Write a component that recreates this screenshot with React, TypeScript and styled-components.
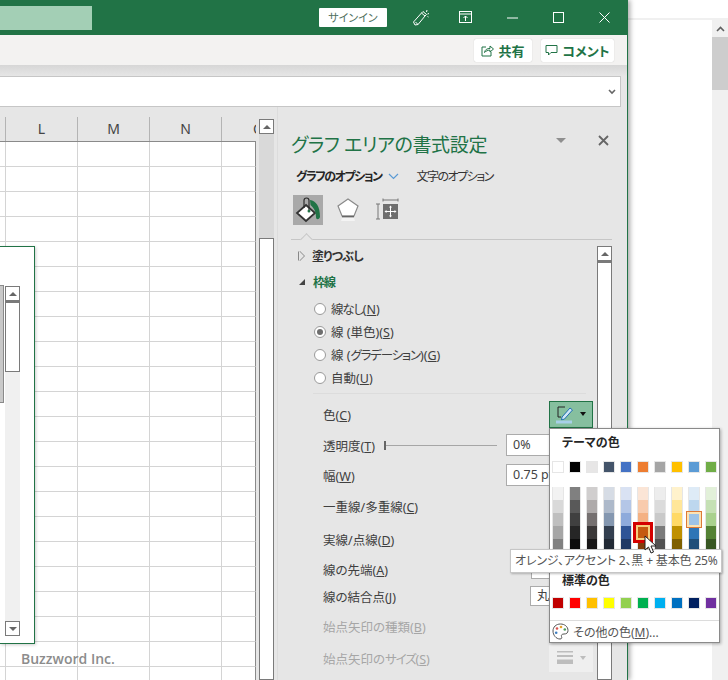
import styled, { createGlobalStyle } from 'styled-components';

const GlobalStyle = createGlobalStyle`
  html, body {
    margin: 0;
    padding: 0;
    background: #fff;
  }
  * {
    box-sizing: border-box;
  }
`;

const GREEN = '#217346';

const Page = styled.div`
  display: flex;
  width: 728px;
  height: 680px;
  overflow: hidden;
  font-family: 'Noto Sans', 'Noto Sans CJK JP', sans-serif;
  font-feature-settings: 'palt';
  font-size: 12px;
  color: #444;
`;

const ExcelWindow = styled.div`
  position: relative;
  z-index: 1;
  display: flex;
  flex-direction: column;
  flex: 0 0 628px;
  border-right: 1px solid ${GREEN};
  background: #e6e6e6;
  box-shadow: 2px 0 5px rgba(0, 0, 0, 0.35);
`;

// タイトルバー
const TitleBar = styled.div`
  display: flex;
  align-items: center;
  flex: 0 0 35px;
  background: ${GREEN};
`;

const SearchBox = styled.div`
  flex: 0 0 92px;
  height: 24px;
  margin-right: 227px;
  background: #a3cfb5;
`;

const SignIn = styled.div`
  flex: 0 0 68px;
  height: 19px;
  margin-right: 21px;
  border-radius: 1px;
  background: #fff;
  color: #4f6f5e;
  font-size: 11px;
  line-height: 19px;
  text-align: center;
`;

const WinButton = styled.div<{ $w: number }>`
  display: flex;
  align-items: center;
  justify-content: center;
  flex: 0 0 ${(p) => p.$w}px;
  color: #fff;
`;

// リボン
const RibbonRow = styled.div`
  display: flex;
  align-items: center;
  justify-content: flex-end;
  gap: 9px;
  flex: 0 0 30px;
  padding-right: 13px;
  background: #f3f2f1;
`;

const RibbonButton = styled.div<{ $w: number }>`
  display: flex;
  align-items: center;
  justify-content: center;
  gap: 4px;
  width: ${(p) => p.$w}px;
  height: 23px;
  border-radius: 2px;
  background: #fff;
  box-shadow: 0 0 1px rgba(0, 0, 0, 0.25);
  color: ${GREEN};
  font-size: 13px;
  font-weight: 700;
`;

const FormulaArea = styled.div`
  flex: 0 0 42px;
  padding: 11px 6px 0 0;
  background: linear-gradient(#d6d6d6, #e6e6e6 11px);
`;

const FormulaInput = styled.div`
  display: flex;
  align-items: center;
  justify-content: flex-end;
  height: 31px;
  padding-right: 4px;
  border: 1px solid #c6c6c6;
  border-left: 0;
  background: #fff;
  color: #666;
`;

const Body = styled.div`
  display: flex;
  flex: 1;
  min-height: 0;
`;

// シート
const SheetArea = styled.div`
  position: relative;
  display: flex;
  flex: 0 0 277px;
  padding-top: 10px;
  overflow: hidden;
`;

const SheetColumn = styled.div`
  flex: 0 0 256px;
  overflow: hidden;
`;

const HeaderRow = styled.div`
  display: grid;
  grid-template-columns: 6px repeat(3, 72px) 34px;
  height: 25px;
  border-bottom: 1px solid #8a8a8a;
`;

const HeaderCell = styled.div<{ $clip?: boolean }>`
  border-right: 1px solid #b4b4b4;
  color: #444;
  font-size: 14px;
  line-height: 23px;
  text-align: ${(p) => (p.$clip ? 'left' : 'center')};
  padding-left: ${(p) => (p.$clip ? '31px' : '0')};
  overflow: hidden;
  &:last-child {
    border-right: 0;
  }
`;

const GridRow = styled.div`
  display: grid;
  grid-template-columns: 6px repeat(3, 72px) 34px;
  height: 25px;
  background: #fff;
`;

const Cell = styled.div`
  border-right: 1px solid #d4d4d4;
  border-bottom: 1px solid #d4d4d4;
  &:last-child {
    border-right: 1px solid #8a8a8a;
  }
`;

const SheetScroll = styled.div`
  display: flex;
  flex-direction: column;
  flex: 0 0 15px;
  margin: 2px 0 0 3px;
`;

const ArrowButton = styled.div<{ $down?: boolean }>`
  display: flex;
  align-items: center;
  justify-content: center;
  flex: 0 0 15px;
  border: 1px solid #7a7a7a;
  background: #fff;
  &::after {
    content: '';
    border-left: 4px solid transparent;
    border-right: 4px solid transparent;
    ${(p) =>
      p.$down ? 'border-top: 4px solid #666;' : 'border-bottom: 4px solid #666;'}
  }
`;

const Trough = styled.div<{ $h?: number; $light?: boolean }>`
  ${(p) => (p.$h ? `flex: 0 0 ${p.$h}px;` : 'flex: 1;')}
  background: ${(p) => (p.$light ? '#f0f0f0' : '#d9d9d9')};
`;

const Thumb = styled.div<{ $h?: number; $thick?: boolean }>`
  ${(p) => (p.$h ? `flex: 0 0 ${p.$h}px;` : 'flex: 1;')}
  border: 1px solid #7a7a7a;
  border-top-width: ${(p) => (p.$thick ? 2 : 1)}px;
  background: #fff;
`;

const ChartObject = styled.div`
  position: absolute;
  left: 0;
  top: 139px;
  display: flex;
  width: 35px;
  height: 398px;
  padding-top: 39px;
  border: 1px solid ${GREEN};
  border-left: 0;
  background: #fff;
  box-shadow: 1px 1px 3px rgba(0, 0, 0, 0.2);
`;

const ChartSliver = styled.div`
  flex: 0 0 4px;
  height: 118px;
  margin-top: -1px;
  border: 1px solid #8a8a8a;
  border-left: 0;
  background: #c9c9c9;
`;

const ChartScroll = styled.div`
  display: flex;
  flex-direction: column;
  flex: 0 0 15px;
  height: 350px;
  margin-left: 1px;
`;

const Watermark = styled.div`
  position: absolute;
  left: 21px;
  top: 542px;
  color: #8c8c8c;
  font-family: 'Open Sans', sans-serif;
  font-size: 14px;
  font-weight: 600;
`;

// 書式設定ウィンドウ
const Pane = styled.div`
  flex: 1;
  padding: 26px 15px 0 13px;
  border-left: 1px solid #dcdcdc;
  background: #e6e6e6;
`;

const PaneHead = styled.div`
  display: flex;
  align-items: center;
  height: 24px;
`;

const PaneTitle = styled.div`
  flex: 1;
  color: ${GREEN};
  font-size: 19px;
  letter-spacing: -0.35px;
  line-height: 24px;
  white-space: nowrap;
`;

const PaneMenu = styled.div`
  width: 0;
  height: 0;
  margin: -10px 32px 0 0;
  border-left: 5px solid transparent;
  border-right: 5px solid transparent;
  border-top: 5px solid #8f8f8f;
`;

const PaneClose = styled.div`
  display: flex;
  margin: -10px 3px 0 0;
  color: #666;
`;

const OptionTabs = styled.div`
  display: flex;
  align-items: center;
  height: 16px;
  margin: 11px 0 0 5px;
`;

const OptionTab = styled.div<{ $active?: boolean }>`
  color: ${(p) => (p.$active ? '#262626' : '#333')};
  font-size: 12px;
  font-weight: ${(p) => (p.$active ? 700 : 400)};
  letter-spacing: -1.5px;
  white-space: nowrap;
`;

const TabChevron = styled.div`
  display: flex;
  margin: 0 17px 0 7px;
  color: #5b9bd5;
`;

const IconTabs = styled.div`
  display: flex;
  gap: 10px;
  height: 30px;
  margin: 11px 0 0 2px;
`;

const IconTab = styled.div<{ $active?: boolean }>`
  display: flex;
  align-items: center;
  justify-content: center;
  width: 30px;
  height: 30px;
  background: ${(p) => (p.$active ? '#a9a9a9' : 'transparent')};
`;

const TabRule = styled.div`
  position: relative;
  height: 1px;
  margin-top: 14px;
  background: #c6c6c6;
  &::after {
    content: '';
    position: absolute;
    left: 11px;
    top: -4px;
    width: 8px;
    height: 8px;
    border-left: 1px solid #c6c6c6;
    border-top: 1px solid #c6c6c6;
    background: #e6e6e6;
    transform: rotate(45deg);
  }
`;

const PaneScrollArea = styled.div`
  display: flex;
  height: 440px;
`;

const PaneContent = styled.div`
  flex: 0 0 306px;
  padding-top: 3px;
`;

const PaneScroll = styled.div`
  display: flex;
  flex-direction: column;
  flex: 0 0 15px;
  margin-top: 6px;
`;

const SectionRow = styled.div<{ $open?: boolean }>`
  display: flex;
  align-items: center;
  gap: 8px;
  height: 26px;
  padding-left: 8px;
  color: ${(p) => (p.$open ? GREEN : '#333')};
  font-size: 12px;
  font-weight: 700;
  letter-spacing: -0.9px;
`;

const Caret = styled.div<{ $open?: boolean }>`
  width: 0;
  height: 0;
  ${(p) =>
    p.$open
      ? `border-bottom: 6px solid #444; border-left: 6px solid transparent;`
      : `border-left: 5px solid #e6e6e6; border-top: 5px solid transparent; border-bottom: 5px solid transparent; outline: none; filter: drop-shadow(1px 0 0 #888) drop-shadow(-1px 0 0 #888);`}
`;

const RadioGroup = styled.div`
  margin-top: 2px;
  padding-left: 23px;
`;

const RadioRow = styled.div`
  display: flex;
  align-items: center;
  gap: 5px;
  height: 23px;
  font-size: 12.5px;
  color: #404040;
`;

const Radio = styled.div<{ $on?: boolean }>`
  display: flex;
  align-items: center;
  justify-content: center;
  width: 12px;
  height: 12px;
  border: 1px solid #9a9a9a;
  border-radius: 50%;
  background: #fff;
  &::after {
    content: '';
    width: 6px;
    height: 6px;
    border-radius: 50%;
    background: ${(p) => (p.$on ? '#6e6e6e' : 'transparent')};
  }
`;

const Rule = styled.div`
  height: 1px;
  margin: 4px 11px 5px 22px;
  background: #dcdcdc;
`;

const PropRow = styled.div<{ $h: number; $off?: boolean }>`
  display: flex;
  align-items: center;
  justify-content: space-between;
  height: ${(p) => p.$h}px;
  padding: 0 4px 0 32px;
  color: ${(p) => (p.$off ? '#a6a6a6' : '#404040')};
  font-size: 12.5px;
  white-space: nowrap;
`;

// メイリオUIの幅に合わせてカタカナを詰める
const Tight = styled.span`
  letter-spacing: -1.2px;
`;

const Slider = styled.div`
  position: relative;
  flex: 0 0 113px;
  height: 1px;
  background: #a6a6a6;
  &::before {
    content: '';
    position: absolute;
    left: 0;
    top: -4px;
    width: 2px;
    height: 9px;
    background: #666;
  }
`;

const ValueBox = styled.div<{ $w: number; $h: number }>`
  flex: 0 0 ${(p) => p.$w}px;
  height: ${(p) => p.$h}px;
  padding-left: 6px;
  border: 1px solid #ababab;
  background: #fff;
  color: #444;
  font-size: 12.5px;
  line-height: ${(p) => p.$h - 2}px;
  overflow: hidden;
`;

const ColorAnchor = styled.div`
  position: relative;
`;

const ColorButton = styled.div`
  display: flex;
  align-items: center;
  justify-content: center;
  gap: 5px;
  width: 44px;
  height: 27px;
  border: 1px solid ${GREEN};
  background: #86bf9f;
`;

const ButtonCaret = styled.div<{ $off?: boolean }>`
  width: 0;
  height: 0;
  border-left: 3.5px solid transparent;
  border-right: 3.5px solid transparent;
  border-top: 4px solid ${(p) => (p.$off ? '#bdbdbd' : '#111')};
`;

const DisabledButton = styled.div`
  display: flex;
  align-items: center;
  justify-content: center;
  gap: 6px;
  width: 44px;
  height: 27px;
  background: #efefef;
`;

// 色の選択メニュー
const Picker = styled.div`
  position: absolute;
  left: 0;
  top: 100%;
  z-index: 5;
  width: 171px;
  height: 215px;
  border: 1px solid #8a8a8a;
  background: #fff;
  box-shadow: 1px 1px 3px rgba(0, 0, 0, 0.3);
`;

const PickerTitle = styled.div<{ $top: number }>`
  height: 18px;
  margin-top: ${(p) => p.$top}px;
  padding-left: 12px;
  color: #262626;
  font-size: 12px;
  font-weight: 700;
  line-height: 18px;
`;

const SwatchRow = styled.div<{ $top: number }>`
  display: flex;
  gap: 5px;
  margin-top: ${(p) => p.$top}px;
  padding-left: 2px;
`;

const ShadeColumn = styled.div`
  display: flex;
  flex-direction: column;
`;

const Swatch = styled.div<{ $c: string; $tall?: boolean; $mark?: string }>`
  position: relative;
  width: 12px;
  height: ${(p) => (p.$tall ? 13 : 12)}px;
  background: ${(p) => p.$c};
  ${(p) => (p.$tall ? '' : 'outline: 1px solid #e6e6e6; outline-offset: -1px;')}
  ${(p) =>
    p.$tall
      ? 'border-left: 1px solid #e6e6e6; border-right: 1px solid #e6e6e6;'
      : ''}
  ${(p) =>
    p.$mark === 'hover' &&
    'z-index: 2; border: 0; box-shadow: inset 0 0 0 1px #f6cf7f, 0 0 0 1px #f6cf7f, 0 0 0 4px #d40000;'}
  ${(p) =>
    p.$mark === 'pick' &&
    'z-index: 1; border: 0; box-shadow: inset 0 0 0 1px #fbe3b4, 0 0 0 1px #fbe3b4, 0 0 0 2px #dd7a36;'}
`;

const PickerRule = styled.div`
  height: 1px;
  margin-top: 11px;
  background: #dcdcdc;
`;

const MoreColors = styled.div`
  display: flex;
  align-items: center;
  gap: 4px;
  height: 22px;
  padding-left: 2px;
  color: #555;
  font-size: 12px;
`;

const Tip = styled.div`
  position: absolute;
  left: -40px;
  top: 120px;
  z-index: 6;
  width: 212px;
  height: 24px;
  padding-left: 4px;
  border: 1px solid #c6c6c6;
  background: #fff;
  box-shadow: 1px 1px 2px rgba(0, 0, 0, 0.25);
  color: #555;
  font-size: 12px;
  letter-spacing: -0.15px;
  line-height: 22px;
  white-space: nowrap;
`;

const Pointer = styled.svg`
  position: absolute;
  left: 94px;
  top: 106px;
  z-index: 7;
`;

// 右側のシート
const Side = styled.div`
  display: flex;
  flex-direction: column;
  flex: 1;
  background: #fff;
`;

const SideTop = styled.div`
  flex: 0 0 20px;
  border-bottom: 2px solid #f0f0f0;
`;

const SideBody = styled.div`
  display: flex;
  justify-content: flex-end;
  flex: 1;
`;

const SideScroll = styled.div`
  display: flex;
  flex-direction: column;
  align-items: center;
  width: 16px;
  background: #f0f0f0;
`;

const SideUp = styled.div`
  display: flex;
  align-items: center;
  justify-content: center;
  height: 17px;
  color: #606060;
`;

const SideThumb = styled.div`
  width: 16px;
  height: 53px;
  background: #cdcdcd;
`;

const Key = styled.u`
  text-underline-offset: 1px;
`;

const COLUMNS = ['', 'L', 'M', 'N', 'O'];
const ROWS = Array.from({ length: 23 }, (_, i) => i);

const THEME = [
  '#ffffff', '#000000', '#e7e6e6', '#44546a', '#4472c4',
  '#ed7d31', '#a5a5a5', '#ffc000', '#5b9bd5', '#70ad47',
];

const SHADES = [
  ['#f2f2f2', '#d9d9d9', '#bfbfbf', '#a6a6a6', '#808080'],
  ['#808080', '#595959', '#404040', '#262626', '#0d0d0d'],
  ['#d0cece', '#aeaaaa', '#757070', '#3b3838', '#181717'],
  ['#d6dce5', '#adb9ca', '#8497b0', '#333f50', '#222a35'],
  ['#d9e2f3', '#b4c6e7', '#8eaadb', '#2f5496', '#1f3864'],
  ['#fbe5d6', '#f8cbad', '#f4b183', '#c55a11', '#833c0b'],
  ['#ededed', '#dbdbdb', '#c9c9c9', '#7b7b7b', '#525252'],
  ['#fff2cc', '#ffe699', '#ffd966', '#bf9000', '#7f6000'],
  ['#deebf7', '#bdd7ee', '#9dc3e6', '#2e75b6', '#1f4e79'],
  ['#e2f0d9', '#c5e0b4', '#a9d18e', '#548235', '#385723'],
];

const STANDARD = [
  '#c00000', '#ff0000', '#ffc000', '#ffff00', '#92d050',
  '#00b050', '#00b0f0', '#0070c0', '#002060', '#7030a0',
];

function markOf(col: number, row: number) {
  if (col === 5 && row === 3) return 'hover';
  if (col === 8 && row === 2) return 'pick';
  return undefined;
}

function FillIcon() {
  return (
    <svg width="26" height="27" viewBox="0 0 26 27">
      <path d="M11 8 L20 16 L11 24 L2 16 Z" fill="#fff" stroke="#333" strokeWidth="1.8" />
      <path d="M9 11 V3.5 a2.5 2.5 0 0 1 5 0 V13" fill="none" stroke="#2d2d2d" strokeWidth="1.2" />
      <circle cx="14" cy="14" r="1.5" fill={GREEN} />
      <path d="M15 3 C21 4 25 9 25 20 C24 23 21 23 21 20 C21 16 20 12 15.5 8 Z" fill={GREEN} />
    </svg>
  );
}

function PentagonIcon() {
  return (
    <svg width="24" height="26" viewBox="0 0 24 26">
      <path d="M12 2 L22 9 L18 19 H6 L2 9 Z" fill="#fff" stroke="#8a8a8a" strokeWidth="1.2" />
      <path d="M6 19.5 H18" stroke="#666" strokeWidth="1.6" />
      <path d="M6 21 L5 24 H19 L18 21 Z" fill="#f4f4f4" />
    </svg>
  );
}

function SizeIcon() {
  return (
    <svg width="24" height="24" viewBox="0 0 24 24">
      <path d="M7 2 H22 M7 0.5 V3.5 M22 0.5 V3.5" stroke="#777" strokeWidth="1" fill="none" />
      <path d="M0 6 H4 M2 6 V21 M0 21 H4" stroke="#777" strokeWidth="1" fill="none" />
      <rect x="7" y="6" width="15" height="15" fill="#6e6e6e" />
      <path d="M14.5 8 V19 M9 13.5 H20" stroke="#fff" strokeWidth="1" />
      <path d="M14.5 7.5 l-1.5 2 h3 Z M14.5 19.5 l-1.5 -2 h3 Z M8.5 13.5 l2 -1.5 v3 Z M20.5 13.5 l-2 -1.5 v3 Z" fill="#fff" />
    </svg>
  );
}

function PenIcon() {
  return (
    <svg width="19" height="19" viewBox="0 0 19 19">
      <path d="M9 2 H2 V12 H5" fill="none" stroke="#222" strokeWidth="1" />
      <path d="M6 12 L14 3 L16.5 5 L8.5 14 L5.5 15 Z" fill="#cfe6f7" stroke="#1f6fb0" strokeWidth="1" />
      <rect x="0" y="15.5" width="16" height="3" fill="#a7cfe8" />
    </svg>
  );
}

function PaletteIcon() {
  return (
    <svg width="17" height="17" viewBox="0 0 17 17">
      <path d="M8.5 1 C4 1 1 4 1 8 C1 12 4 16 8 16 C10 16 10 14.5 9.5 13.5 C9 12 10 11 12 11 C14.5 11 16 10 16 7.5 C16 3.5 12.5 1 8.5 1 Z" fill="#fff" stroke="#555" strokeWidth="1" />
      <circle cx="5" cy="5.5" r="1.3" fill="#d9534f" />
      <circle cx="9" cy="4" r="1.3" fill="#e5a52b" />
      <circle cx="12.8" cy="6.5" r="1.3" fill="#4f9d5d" />
      <circle cx="4.2" cy="9.8" r="1.3" fill="#3f7fc1" />
    </svg>
  );
}

function App() {
  return (
    <Page>
      <GlobalStyle />
      <ExcelWindow>
        <TitleBar>
          <SearchBox />
          <SignIn>サインイン</SignIn>
          <WinButton $w={26}>
            <svg width="18" height="18" viewBox="0 0 18 18" fill="none" stroke="currentColor" strokeWidth="1">
              <path d="M1.5 13 L9.5 4 L13 7 L6 15.5 L3 16 Z" />
              <path d="M9.5 4 L11 2.5 L14.5 5.5 L13 7 M3.5 13 L6 15.5" />
              <path d="M15 1 L14.5 3 M17 4.5 L15.5 5 M16.5 8 L15.5 7.5" />
            </svg>
          </WinButton>
          <WinButton $w={64}>
            <svg width="14" height="13" viewBox="0 0 14 13" fill="none" stroke="currentColor" strokeWidth="1">
              <rect x="0.5" y="0.5" width="12" height="11" />
              <path d="M0.5 3 H12.5 M6.5 10 V5 M4.5 7 L6.5 5 L8.5 7" />
            </svg>
          </WinButton>
          <WinButton $w={29}>
            <svg width="11" height="2" viewBox="0 0 11 2" stroke="currentColor" strokeWidth="1">
              <path d="M0 1 H11" />
            </svg>
          </WinButton>
          <WinButton $w={63}>
            <svg width="11" height="11" viewBox="0 0 11 11" fill="none" stroke="currentColor" strokeWidth="1">
              <rect x="0.5" y="0.5" width="10" height="10" />
            </svg>
          </WinButton>
          <WinButton $w={29}>
            <svg width="11" height="11" viewBox="0 0 11 11" fill="none" stroke="currentColor" strokeWidth="1">
              <path d="M0.5 0.5 L10.5 10.5 M10.5 0.5 L0.5 10.5" />
            </svg>
          </WinButton>
        </TitleBar>
        <RibbonRow>
          <RibbonButton $w={58}>
            <svg width="13" height="13" viewBox="0 0 13 13" fill="none" stroke="currentColor" strokeWidth="1">
              <path d="M5 3 H1 V12 H10 V8" />
              <path d="M3.5 8.5 C4 5.5 6 4.5 9 4.5 V2 L12.5 5 L9 8 V6.2 C7 6.2 5 6.8 3.5 8.5 Z" />
            </svg>
            共有
          </RibbonButton>
          <RibbonButton $w={73}>
            <svg width="13" height="13" viewBox="0 0 13 13" fill="none" stroke="currentColor" strokeWidth="1">
              <path d="M1 1.5 H12 V8.5 H6 L3.5 11 V8.5 H1 Z" />
            </svg>
            コメント
          </RibbonButton>
        </RibbonRow>
        <FormulaArea>
          <FormulaInput>
            <svg width="8" height="6" viewBox="0 0 8 6" fill="none" stroke="currentColor" strokeWidth="1.6">
              <path d="M1 1 L4 4 L7 1" />
            </svg>
          </FormulaInput>
        </FormulaArea>
        <Body>
          <SheetArea>
            <SheetColumn>
              <HeaderRow>
                {COLUMNS.map((c) => (
                  <HeaderCell key={c} $clip={c === 'O'}>
                    {c}
                  </HeaderCell>
                ))}
              </HeaderRow>
              {ROWS.map((r) => (
                <GridRow key={r}>
                  {COLUMNS.map((c) => (
                    <Cell key={c} />
                  ))}
                </GridRow>
              ))}
            </SheetColumn>
            <SheetScroll>
              <ArrowButton />
              <Trough $h={104} />
              <Thumb />
            </SheetScroll>
            <ChartObject>
              <ChartSliver />
              <ChartScroll>
                <ArrowButton />
                <Thumb $h={71} $thick />
                <Trough $light />
                <ArrowButton $down />
              </ChartScroll>
            </ChartObject>
            <Watermark>Buzzword Inc.</Watermark>
          </SheetArea>
          <Pane>
            <PaneHead>
              <PaneTitle>グラフ エリアの書式設定</PaneTitle>
              <PaneMenu />
              <PaneClose>
                <svg width="11" height="11" viewBox="0 0 11 11" fill="none" stroke="currentColor" strokeWidth="1.8">
                  <path d="M1 1 L10 10 M10 1 L1 10" />
                </svg>
              </PaneClose>
            </PaneHead>
            <OptionTabs>
              <OptionTab $active>グラフのオプション</OptionTab>
              <TabChevron>
                <svg width="11" height="7" viewBox="0 0 11 7" fill="none" stroke="currentColor" strokeWidth="1.2">
                  <path d="M1 1 L5.5 5.5 L10 1" />
                </svg>
              </TabChevron>
              <OptionTab>文字のオプション</OptionTab>
            </OptionTabs>
            <IconTabs>
              <IconTab $active>
                <FillIcon />
              </IconTab>
              <IconTab>
                <PentagonIcon />
              </IconTab>
              <IconTab>
                <SizeIcon />
              </IconTab>
            </IconTabs>
            <TabRule />
            <PaneScrollArea>
              <PaneContent>
                <SectionRow>
                  <Caret />
                  塗りつぶし
                </SectionRow>
                <SectionRow $open>
                  <Caret $open />
                  枠線
                </SectionRow>
                <RadioGroup>
                  <RadioRow>
                    <Radio />
                    <span>
                      <Tight>線なし</Tight>(<Key>N</Key>)
                    </span>
                  </RadioRow>
                  <RadioRow>
                    <Radio $on />
                    <span>
                      線 (単色)(<Key>S</Key>)
                    </span>
                  </RadioRow>
                  <RadioRow>
                    <Radio />
                    <span>
                      線 (<Tight>グラデーション</Tight>)(<Key>G</Key>)
                    </span>
                  </RadioRow>
                  <RadioRow>
                    <Radio />
                    <span>
                      自動(<Key>U</Key>)
                    </span>
                  </RadioRow>
                </RadioGroup>
                <Rule />
                <PropRow $h={30}>
                  <span>
                    色(<Key>C</Key>)
                  </span>
                  <ColorAnchor>
                    <ColorButton>
                      <PenIcon />
                      <ButtonCaret />
                    </ColorButton>
                    <Picker>
                      <PickerTitle $top={5}>テーマの色</PickerTitle>
                      <SwatchRow $top={9}>
                        {THEME.map((c) => (
                          <Swatch key={c} $c={c} />
                        ))}
                      </SwatchRow>
                      <SwatchRow $top={14}>
                        {SHADES.map((col, i) => (
                          <ShadeColumn key={col[0] + i}>
                            {col.map((c, j) => (
                              <Swatch key={c} $c={c} $tall $mark={markOf(i, j)} />
                            ))}
                          </ShadeColumn>
                        ))}
                      </SwatchRow>
                      <PickerTitle $top={20}>標準の色</PickerTitle>
                      <SwatchRow $top={7}>
                        {STANDARD.map((c) => (
                          <Swatch key={c} $c={c} />
                        ))}
                      </SwatchRow>
                      <PickerRule />
                      <MoreColors>
                        <PaletteIcon />
                        <span>
                          その他の色(<Key>M</Key>)...
                        </span>
                      </MoreColors>
                      <Tip>オレンジ、アクセント 2、黒 + 基本色 25%</Tip>
                      <Pointer width="13" height="19" viewBox="0 0 13 19">
                        <path
                          d="M1 1 V15 L4.5 12 L7 18 L9.5 17 L7 11 H12 Z"
                          fill="#fff"
                          stroke="#222"
                          strokeWidth="1"
                        />
                      </Pointer>
                    </Picker>
                  </ColorAnchor>
                </PropRow>
                <PropRow $h={32}>
                  <span>
                    透明度(<Key>T</Key>)
                  </span>
                  <Slider />
                  <ValueBox $w={87} $h={22}>
                    0%
                  </ValueBox>
                </PropRow>
                <PropRow $h={28}>
                  <span>
                    幅(<Key>W</Key>)
                  </span>
                  <ValueBox $w={87} $h={22}>
                    0.75 pt
                  </ValueBox>
                </PropRow>
                <PropRow $h={34}>
                  <span>
                    一重線/多重線(<Key>C</Key>)
                  </span>
                </PropRow>
                <PropRow $h={32}>
                  <span>
                    実線/点線(<Key>D</Key>)
                  </span>
                </PropRow>
                <PropRow $h={28}>
                  <span>
                    線の先端(<Key>A</Key>)
                  </span>
                  <ValueBox $w={62} $h={20} />
                </PropRow>
                <PropRow $h={26}>
                  <span>
                    線の結合点(<Key>J</Key>)
                  </span>
                  <ValueBox $w={63} $h={20}>
                    丸
                  </ValueBox>
                </PropRow>
                <PropRow $h={34} $off>
                  <span>
                    始点矢印の種類(<Key>B</Key>)
                  </span>
                </PropRow>
                <PropRow $h={30} $off>
                  <span>
                    始点矢印の<Tight>サイズ</Tight>(<Key>S</Key>)
                  </span>
                  <DisabledButton>
                    <svg width="17" height="14" viewBox="0 0 17 14" fill="#bdbdbd">
                      <rect y="0" width="16" height="1.5" />
                      <rect y="4" width="16" height="2" />
                      <rect y="8.5" width="16" height="4.5" />
                    </svg>
                    <ButtonCaret $off />
                  </DisabledButton>
                </PropRow>
              </PaneContent>
              <PaneScroll>
                <ArrowButton />
                <Thumb $thick />
              </PaneScroll>
            </PaneScrollArea>
          </Pane>
        </Body>
      </ExcelWindow>
      <Side>
        <SideTop />
        <SideBody>
          <SideScroll>
            <SideUp>
              <svg width="9" height="6" viewBox="0 0 9 6" fill="none" stroke="currentColor" strokeWidth="1.6">
                <path d="M1 5 L4.5 1.5 L8 5" />
              </svg>
            </SideUp>
            <SideThumb />
          </SideScroll>
        </SideBody>
      </Side>
    </Page>
  );
}

export default App;
